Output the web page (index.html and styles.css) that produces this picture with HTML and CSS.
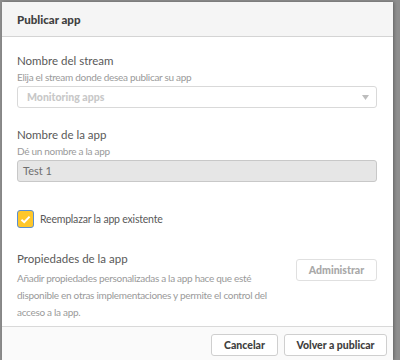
FILE: index.html
```html
<!DOCTYPE html>
<html lang="es">
<head>
  <meta charset="UTF-8">
  <title>Publicar app</title>
  <link rel="stylesheet" href="styles.css">
</head>
<body>
  <div class="dialog">
    <div class="dialog-header">
      <h2>Publicar app</h2>
    </div>

    <div class="dialog-body">
      <div class="field">
        <label class="field-label">Nombre del stream</label>
        <div class="field-hint">Elija el stream donde desea publicar su app</div>
        <div class="select">
          <span>Monitoring apps</span>
          <svg class="caret" width="7" height="5" viewBox="0 0 7 5"><path d="M0 0 H7 L3.5 5 Z" fill="#bdbdbd"/></svg>
        </div>
      </div>

      <div class="field">
        <label class="field-label">Nombre de la app</label>
        <div class="field-hint">Dé un nombre a la app</div>
        <div class="text-input">Test 1</div>
      </div>

      <div class="check-row">
        <span class="checkbox">
          <svg width="11" height="9" viewBox="0 0 12 10"><path d="M1.5 5.2 L4.6 8 L10.5 1.8" fill="none" stroke="#fff" stroke-width="2.2"/></svg>
        </span>
        <span class="check-label">Reemplazar la app existente</span>
      </div>

      <div class="props">
        <div class="props-text">
          <div class="field-label">Propiedades de la app</div>
          <p>Añadir propiedades personalizadas a la app hace que esté disponible en otras implementaciones y permite el control del acceso a la app.</p>
        </div>
        <button class="btn btn-disabled">Administrar</button>
      </div>
    </div>

    <div class="dialog-footer">
      <button class="btn btn-cancel">Cancelar</button>
      <button class="btn btn-publish">Volver a publicar</button>
    </div>
  </div>
</body>
</html>
```

FILE: styles.css
```css
/* Reset */
* {
  margin: 0;
  padding: 0;
  box-sizing: border-box;
}

body {
  font-family: Lato, 'Open Sans', sans-serif;
  background: #8e8e8e;
  height: 360px;
  overflow: hidden;
}

.dialog {
  margin: 2px 0 0 2px;
  width: 391px;
  height: 358px;
  background: #fff;
  box-shadow: 1px 0 3px rgba(0,0,0,0.3);
  display: flex;
  flex-direction: column;
}

.dialog-header {
  height: 35px;
  background: #f5f5f5;
  border-bottom: 1px solid #d4d4d4;
  padding: 0 15px;
  display: flex;
  align-items: center;
}

.dialog-header h2 {
  font-size: 11.5px;
  font-weight: 900;
  color: #404040;
}

.dialog-body {
  padding: 16px 16px 0 15px;
  height: 289px;
}

.field { margin-bottom: 19px; }

.field-label {
  display: block;
  font-size: 11.5px;
  line-height: 16px;
  color: #595959;
}

.field-hint {
  font-size: 10px;
  letter-spacing: -0.3px;
  line-height: 14px;
  color: #9a9a9a;
  margin-top: 1px;
  margin-bottom: 2px;
}

.select {
  height: 22px;
  border: 1px solid #d9d9d9;
  border-radius: 3px;
  display: flex;
  align-items: center;
  justify-content: space-between;
  padding: 0 7px 0 9px;
  font-size: 10.5px;
  font-weight: 900;
  color: #c8c8c8;
}

.text-input {
  height: 22px;
  border: 1px solid #c8c8c8;
  border-radius: 3px;
  background: #e6e6e6;
  padding: 0 5px;
  font-size: 11px;
  line-height: 20px;
  color: #6e6e6e;
}

.check-row {
  display: flex;
  align-items: center;
  margin-top: 28px;
  height: 18px;
}

.checkbox {
  width: 17px;
  height: 18px;
  border: 1px solid #5b8fd0;
  border-radius: 3px;
  background: #ffc72a;
  display: flex;
  align-items: center;
  justify-content: center;
  margin-right: 6px;
}

.check-label {
  font-size: 10.5px;
  letter-spacing: -0.2px;
  color: #595959;
}

.props {
  display: flex;
  justify-content: space-between;
  margin-top: 23px;
}

.props-text { width: 262px; }

.props p {
  margin-top: 3px;
  font-size: 10px;
  letter-spacing: -0.3px;
  line-height: 17px;
  color: #9a9a9a;
}

.btn {
  height: 22px;
  font-family: inherit;
  font-size: 10.5px;
  font-weight: 900;
  white-space: nowrap;
  color: #404040;
  background: #fff;
  border: 1px solid #cfcfcf;
  border-radius: 3px;
}

.btn-disabled {
  margin-top: 8px;
  width: 81px;
  color: #a8a8a8;
  border-color: #e0e0e0;
}

.dialog-footer {
  border-top: 1px solid #d9d9d9;
  background: #fafafa;
  padding: 7px 6px 0 0;
  display: flex;
  justify-content: flex-end;
  gap: 6px;
  flex: 1;
}

.btn-cancel { width: 67px; }
.btn-publish { width: 103px; }
```
